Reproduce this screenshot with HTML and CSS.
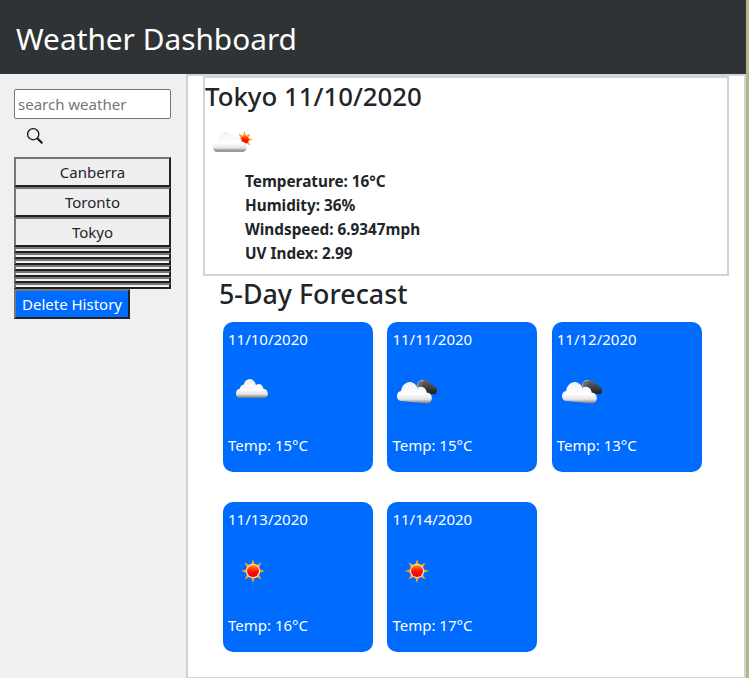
FILE: index.html
```html
<!DOCTYPE html>
<html lang="en">
<head>
    <meta charset="UTF-8">
    <meta name="viewport" content="width=device-width, initial-scale=1.0">
    <title>Weather Dashboard</title>
    <link rel="stylesheet" href="styles.css">
</head>
<body>
    <svg class="icon-defs" width="0" height="0" aria-hidden="true">
        <defs>
            <linearGradient id="cloud-white" x1="0" y1="0" x2="0" y2="1">
                <stop offset="0" stop-color="#f0f0f0"/>
                <stop offset="0.55" stop-color="#ffffff"/>
                <stop offset="0.8" stop-color="#e4e4e4"/>
                <stop offset="1" stop-color="#707070"/>
            </linearGradient>
            <linearGradient id="cloud-dark" x1="0" y1="0" x2="0" y2="1">
                <stop offset="0" stop-color="#666666"/>
                <stop offset="1" stop-color="#1c1c1c"/>
            </linearGradient>
            <linearGradient id="sun-red" x1="0" y1="0" x2="0" y2="1">
                <stop offset="0" stop-color="#ff9a00"/>
                <stop offset="0.5" stop-color="#ff1500"/>
                <stop offset="1" stop-color="#e60000"/>
            </linearGradient>
            <g id="sun-rays">
                <path fill="#ff9d1e" d="M12 0l2 6h-4zM12 24l-2-6h4zM0 12l6-2v4zM24 12l-6 2v-4zM3.500 3.500l5.500 2.800-2.800 2.800zM20.500 3.500l-2.800 5.600-2.800-2.800zM3.500 20.500l2.800-5.600 2.800 2.800zM20.500 20.500l-5.600-2.800 2.800-2.800z"/>
            </g>
            <path id="cloud-big" fill="url(#cloud-white)" d="M8.500 38c-2.500 0-4-1.700-4-3.800 0-2.200 1.700-3.800 3.800-3.900.8-3.900 4.200-6.800 8-6.800 3.300 0 6 1.800 7.400 4.600 1-.6 2.100-.9 3.200-.9 2.800 0 5 1.800 5.400 4.500 2.700-.2 4.700 1.700 4.700 3.900 0 2.400-1.700 4.400-4 4.400z"/>
            <path id="cloud-back" fill="url(#cloud-dark)" d="M29 34c-2 0-3-1.300-3-2.800 0-1.700 1.200-2.800 2.800-2.900.6-2.200 2.300-3.500 4.500-3.500 2.100 0 3.800 1.100 4.500 3 2.300-.6 3.700.7 4.200 1.900 2.300 0 3.400 1.200 3.400 2.400 0 1.300-1 2.900-2.800 2.900z"/>
        </defs>
    </svg>

    <div class="pagina">
        <header class="testata">
            <h1>Weather Dashboard</h1>
        </header>

        <div class="corpo">
            <aside class="barra">
                <input type="text" class="campo-ricerca" placeholder="search weather">
                <button class="pulsante-cerca" aria-label="search">
                    <svg width="18" height="18" viewBox="0 0 18 18">
                        <circle cx="7.200" cy="7.200" r="5.600" fill="none" stroke="#111" stroke-width="1.300"/>
                        <path d="M11.300 11.300l5 5" stroke="#111" stroke-width="2" fill="none"/>
                    </svg>
                </button>
                <div class="cronologia">
                    <button class="citta">Canberra</button>
                    <button class="citta">Toronto</button>
                    <button class="citta">Tokyo</button>
                    <button class="citta"></button>
                    <button class="citta"></button>
                    <button class="citta"></button>
                    <button class="citta"></button>
                    <button class="citta"></button>
                    <button class="citta"></button>
                    <button class="citta"></button>
                </div>
                <button class="cancella">Delete History</button>
            </aside>

            <main class="contenuto">
                <section class="attuale">
                    <h2>Tokyo 11/10/2020</h2>
                    <svg class="icona-attuale" width="40" height="28" viewBox="0 0 40 28">
                        <use href="#sun-rays" transform="translate(23.100 5.100) scale(0.7)"/>
                        <circle cx="31.500" cy="13.500" r="4.400" fill="url(#sun-red)"/>
                        <path fill="url(#cloud-white)" transform="translate(0 -2.400) scale(1 1.2)" d="M4 23.500c-2.500 0-4-1.800-4-4 0-2.400 1.800-4 4-4.200C4.800 10 8.500 7 12.500 7c3.600 0 6.500 2 7.800 5 1-.8 2.200-1.200 3.500-1.200 2.700 0 4.800 1.700 5.200 4.300 2.900-.3 4.800 1.600 4.800 4.100 0 2.500-1.800 4.300-4.300 4.300z"/>
                    </svg>
                    <ul class="dati">
                        <li>Temperature: 16°C</li>
                        <li>Humidity: 36%</li>
                        <li>Windspeed: 6.9347mph</li>
                        <li>UV Index: 2.99</li>
                    </ul>
                </section>

                <h2 class="titolo-previsioni">5-Day Forecast</h2>

                <section class="previsioni">
                    <article class="scheda">
                        <p>11/10/2020</p>
                        <svg class="icona" width="50" height="50" viewBox="0 0 50 50">
                            <path fill="url(#cloud-white)" transform="translate(0.160 -16.200) scale(1.045 1.377)" d="M11 35c-2.300 0-3.500-1.500-3.500-3.300 0-2 1.500-3.300 3.500-3.300.5-1.800 2-3 3.800-3 .9-2.600 3.200-4.200 5.800-4.200 2.900 0 5.300 1.800 6 4.500.7-.6 1.700-.9 2.700-.9 2.300 0 4.100 1.500 4.500 3.600 2.500-.2 4.200 1.400 4.200 3.500 0 1.900-1.400 3.100-3.300 3.100z"/>
                        </svg>
                        <p>Temp: 15°C</p>
                    </article>
                    <article class="scheda">
                        <p>11/11/2020</p>
                        <svg class="icona" width="50" height="50" viewBox="0 0 50 50">
                            <circle cx="30" cy="19" r="4.500" fill="#6a6a6a" stroke="#b0b0b0"/>
                            <use href="#cloud-back" transform="translate(5.100 -20.700) scale(0.88 1.4)"/>
                            <use href="#cloud-big" transform="translate(0.200 -14.800) scale(1.07 1.31)"/>
                        </svg>
                        <p>Temp: 15°C</p>
                    </article>
                    <article class="scheda">
                        <p>11/12/2020</p>
                        <svg class="icona" width="50" height="50" viewBox="0 0 50 50">
                            <circle cx="30" cy="19" r="4.500" fill="#6a6a6a" stroke="#b0b0b0"/>
                            <use href="#cloud-back" transform="translate(5.100 -20.700) scale(0.88 1.4)"/>
                            <use href="#cloud-big" transform="translate(0.200 -14.800) scale(1.07 1.31)"/>
                        </svg>
                        <p>Temp: 13°C</p>
                    </article>
                    <article class="scheda">
                        <p>11/13/2020</p>
                        <svg class="icona" width="50" height="50" viewBox="0 0 50 50">
                            <use href="#sun-rays" transform="translate(13 13)"/>
                            <circle cx="25" cy="25" r="7.200" fill="#ffe0b0"/>
                            <circle cx="25" cy="25" r="6" fill="url(#sun-red)"/>
                        </svg>
                        <p>Temp: 16°C</p>
                    </article>
                    <article class="scheda">
                        <p>11/14/2020</p>
                        <svg class="icona" width="50" height="50" viewBox="0 0 50 50">
                            <use href="#sun-rays" transform="translate(13 13)"/>
                            <circle cx="25" cy="25" r="7.200" fill="#ffe0b0"/>
                            <circle cx="25" cy="25" r="6" fill="url(#sun-red)"/>
                        </svg>
                        <p>Temp: 17°C</p>
                    </article>
                </section>
            </main>
        </div>
    </div>
</body>
</html>
```

FILE: styles.css
```css
* {
    box-sizing: border-box;
    margin: 0;
    padding: 0;
}

html, body {
    height: 100%;
}

body {
    font-family: 'Noto Sans', 'Open Sans', sans-serif;
    color: #212529;
    background: #b6b48e;
    overflow: hidden;
}

.icon-defs {
    position: absolute;
}

.pagina {
    width: 746px;
    height: 678px;
    display: flex;
    flex-direction: column;
}

.testata {
    height: 74px;
    flex-shrink: 0;
    display: flex;
    align-items: center;
    padding: 2px 0 0 16px;
    background: #2f3335;
    color: #fff;
}

.testata h1 {
    font-size: 29.8px;
    font-weight: 400;
}

.corpo {
    flex: 1;
    display: flex;
    min-height: 0;
}

.barra {
    width: 186px;
    flex-shrink: 0;
    padding: 15px 15px 0 14px;
    background: #f0f0f0;
}

.campo-ricerca {
    display: block;
    width: 157px;
    height: 30px;
    padding: 0 3px;
    font-family: inherit;
    font-size: 15px;
    border: 1px solid #767676;
    border-radius: 2px;
    background: #fff;
}

.campo-ricerca::placeholder {
    color: #757575;
}

.pulsante-cerca {
    display: block;
    width: 42px;
    height: 38px;
    padding: 0 0 2px 12px;
    border: none;
    background: none;
    text-align: left;
}

.citta {
    display: block;
    width: 157px;
    height: 30px;
    font-family: inherit;
    font-size: 15px;
    color: #212529;
    background: #efefef;
    border: 2px solid;
    border-color: #767676 #212121 #212121 #767676;
}

.citta:empty {
    height: 6px;
}

.cancella {
    display: block;
    width: 116px;
    height: 30px;
    font-family: inherit;
    font-size: 15px;
    color: #fff;
    background: #006bff;
    border: 2px solid;
    border-color: #767676 #212121 #212121 #767676;
}

.contenuto {
    flex: 1;
    min-width: 0;
    padding-left: 15px;
    padding-right: 15px;
    background: #fff;
    border: 2px solid #d3d3d3;
    border-bottom-width: 1px;
}

.attuale {
    width: 526px;
    height: 200px;
    border: 2px solid #d3d3d3;
}

.attuale h2 {
    font-size: 25.8px;
    font-weight: 500;
    line-height: 36px;
}

.icona-attuale {
    display: block;
    margin: 12px 0 0 8px;
}

.dati {
    list-style: none;
    margin-top: 15px;
    padding-left: 40px;
    font-size: 15.3px;
    font-weight: 700;
    line-height: 24px;
}

.titolo-previsioni {
    padding-left: 16px;
    font-size: 26.8px;
    font-weight: 500;
    line-height: 36px;
}

.previsioni {
    display: flex;
    flex-wrap: wrap;
    column-gap: 14.4px;
    row-gap: 30px;
    margin-top: 10px;
    padding-left: 20px;
}

.scheda {
    width: 150px;
    height: 150px;
    padding: 5px 5px;
    border-radius: 10px;
    background: #006bff;
    color: #fff;
    font-size: 15px;
    line-height: 24px;
}

.icona {
    display: block;
    margin-top: 15px;
    margin-bottom: 17px;
}
```
